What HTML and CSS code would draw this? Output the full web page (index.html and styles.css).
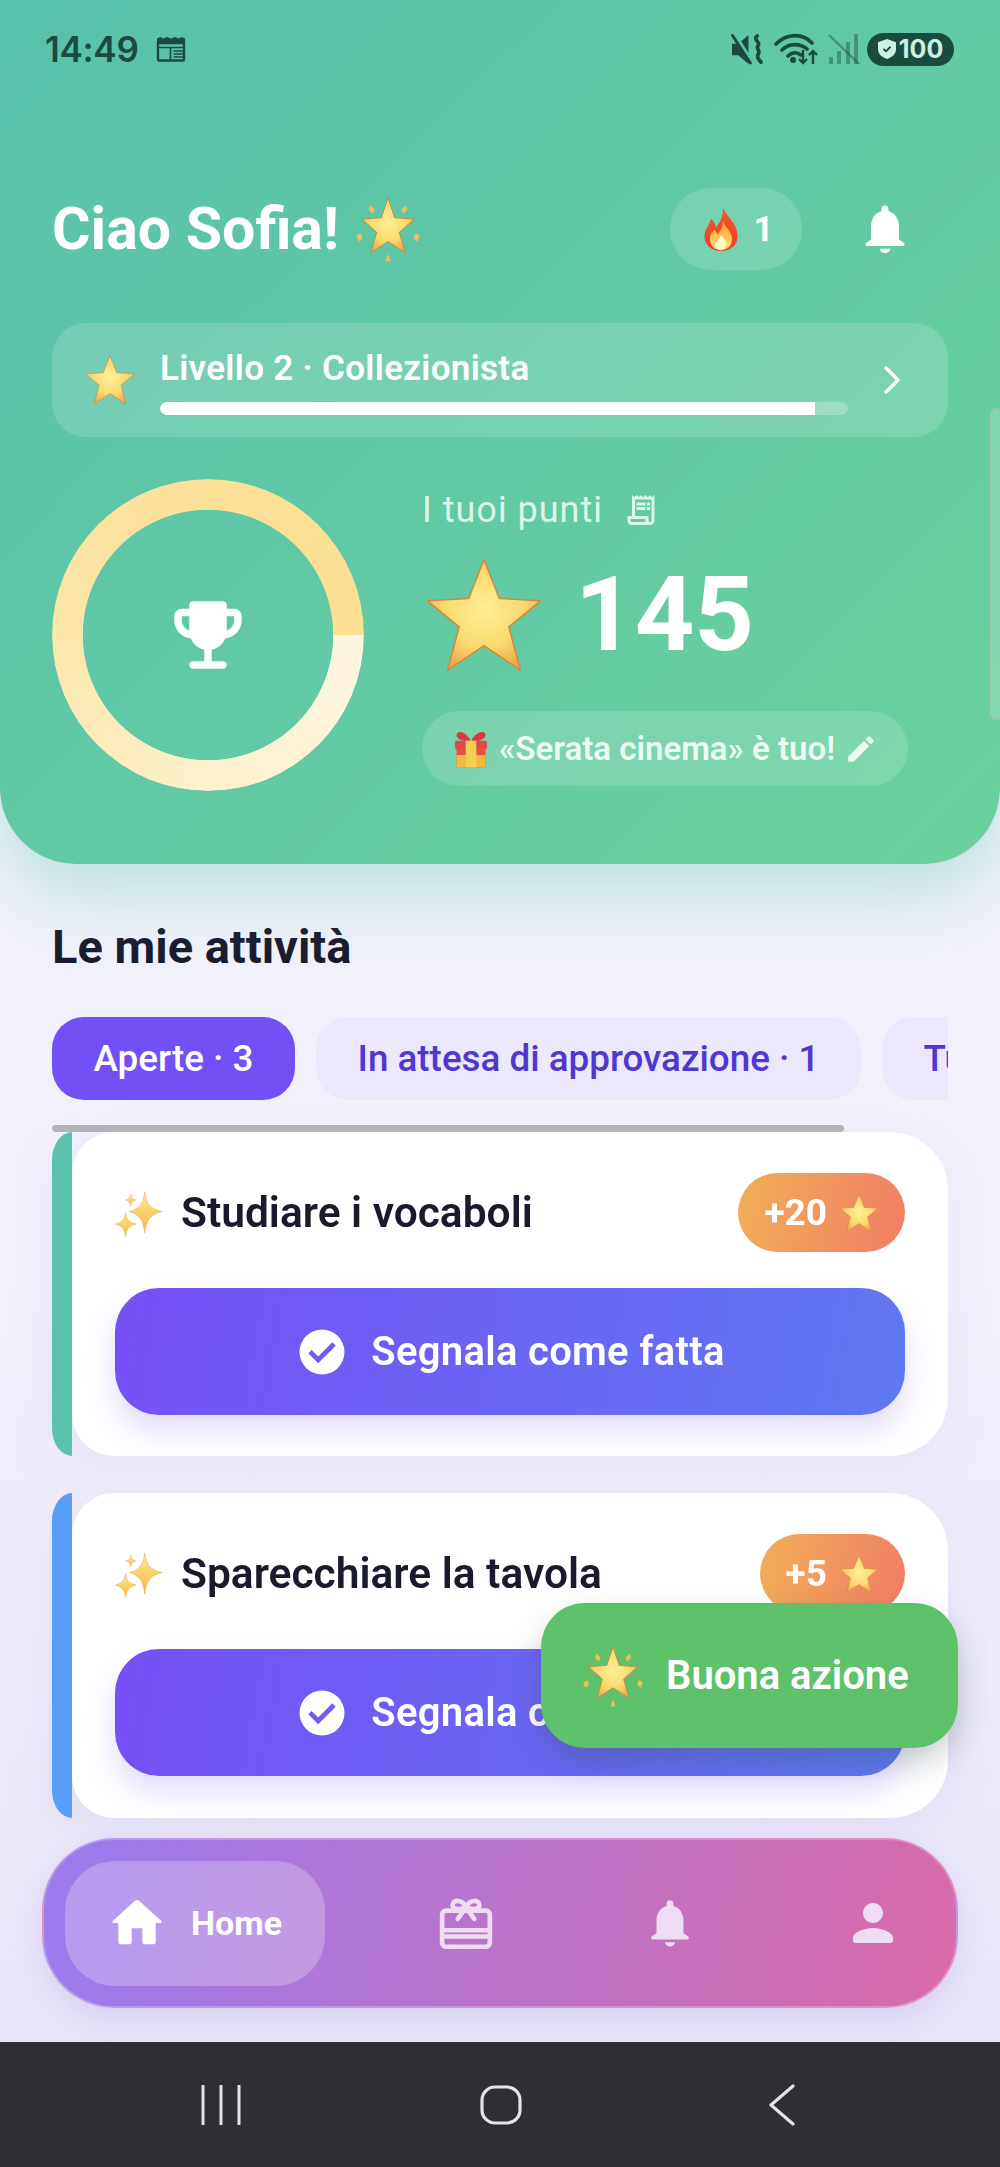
FILE: index.html
```html
<!DOCTYPE html>
<html lang="it">
<head>
<meta charset="utf-8">
<title>Ciao Sofia</title>
<link rel="stylesheet" href="styles.css">
</head>
<body>
<svg class="defs" aria-hidden="true">
  <defs>
    <radialGradient id="gStar" cx="50%" cy="45%" r="58%">
      <stop offset="0" stop-color="#FFEE96"/>
      <stop offset=".6" stop-color="#FBD970"/>
      <stop offset="1" stop-color="#EFA24A"/>
    </radialGradient>
    <linearGradient id="gSpark" x1="0" y1="0" x2="0" y2="1">
      <stop offset="0" stop-color="#FFE98F"/>
      <stop offset="1" stop-color="#F3B944"/>
    </linearGradient>
    <linearGradient id="gFire" x1="0" y1="0" x2="0" y2="1">
      <stop offset="0" stop-color="#F4572B"/>
      <stop offset="1" stop-color="#E8402B"/>
    </linearGradient>
    <linearGradient id="gFlame" x1="0" y1="0" x2="0" y2="1">
      <stop offset="0" stop-color="#F99A2C"/>
      <stop offset="1" stop-color="#FFE36E"/>
    </linearGradient>
    <symbol id="star" viewBox="0 0 100 100">
      <path d="M50 3 63 36 98 38 71 60 81 97 50 76 19 97 29 60 2 38 37 36Z" fill="url(#gStar)" stroke="#CF8A3F" stroke-width="1.300" stroke-linejoin="round"/>
    </symbol>
    <symbol id="glow" viewBox="0 0 100 100">
      <path d="M50 3 60 33 90 35 67 55 76 86 50 69 24 86 33 55 10 35 40 33Z" fill="url(#gStar)" stroke="#C98238" stroke-width="1.300" stroke-linejoin="round"/>
      <path d="M23 14 30 20 27 27 21 21ZM77 14 70 20 73 27 79 21ZM2 60 9 57 11 65 5 69ZM98 60 91 57 89 65 95 69ZM50 88 54 99H46Z" fill="#F4BE55"/>
    </symbol>
    <symbol id="sparkles" viewBox="0 0 100 100">
      <path d="M62 6C65 32 74 41 98 47 74 53 65 64 62 92 59 64 50 53 30 47 50 41 59 32 62 6Z" fill="url(#gSpark)" stroke="#E3A63C" stroke-width="1"/>
      <path d="M22 49C24 64 29 69 44 73 29 77 24 83 22 99 20 83 15 77 1 73 15 69 20 64 22 49Z" fill="url(#gSpark)" stroke="#E3A63C" stroke-width="1"/>
      <path d="M33 10C34 18 36 21 44 23 36 25 34 28 33 36 32 28 30 25 22 23 30 21 32 18 33 10Z" fill="url(#gSpark)" stroke="#E3A63C" stroke-width=".8"/>
    </symbol>
    <symbol id="fire" viewBox="0 0 100 100">
      <path d="M54 2C60 22 86 36 86 66 86 86 70 98 50 98 30 98 14 86 14 66 14 50 24 42 28 28 36 34 38 40 39 46 48 36 56 20 54 2Z" fill="url(#gFire)"/>
      <path d="M54 32C58 46 74 54 74 72 74 88 63 96 50 96 37 96 26 88 26 72 26 62 32 56 35 50 39 54 41 58 42 62 49 54 55 44 54 32Z" fill="url(#gFlame)"/>
      <path d="M51 62C54 70 62 74 62 83 62 91 56 96 50 96 44 96 38 91 38 83 38 74 48 72 51 62Z" fill="#FFF6C9"/>
    </symbol>
    <symbol id="gift" viewBox="0 0 100 100">
      <path d="M48 26C36 4 14 0 12 12 10 24 30 30 48 30ZM52 26C64 4 86 0 88 12 90 24 70 30 52 30Z" fill="#D9383F"/>
      <rect x="8" y="28" width="84" height="22" rx="3" fill="#E3454A"/>
      <rect x="12" y="48" width="76" height="50" rx="3" fill="#E2533F"/>
      <rect x="12" y="66" width="76" height="32" rx="3" fill="#F2B73D"/>
      <rect x="36" y="28" width="28" height="70" fill="#F8CE52"/>
    </symbol>
    <symbol id="i-bell" viewBox="0 0 24 24">
      <path d="M12 1.900a1.500 1.500 0 0 1 1.500 1.500v1C16.400 5.100 18 7.800 18 11v5.500l2 1.400c.7.500.4 1.400-.4 1.400H4.400c-.8 0-1.100-.9-.4-1.400l2-1.400V11c0-3.200 1.600-5.900 4.500-6.600v-1A1.500 1.500 0 0 1 12 1.900zM9.700 20.500h4.600c-.2 1.100-1.100 1.900-2.300 1.900s-2.100-.8-2.300-1.900z"/>
    </symbol>
    <symbol id="i-home" viewBox="0 0 24 24">
      <path d="M10 19v-5h4v5c0 .55.45 1 1 1h3c.55 0 1-.45 1-1v-7h1.700c.46 0 .68-.57.33-.87L12.670 3.600c-.38-.34-.96-.34-1.340 0l-8.360 7.530c-.34.3-.13.87.33.87H5v7c0 .55.45 1 1 1h3c.55 0 1-.45 1-1z"/>
    </symbol>
    <symbol id="i-person" viewBox="0 0 24 24">
      <path d="M12 12c2.210 0 4-1.790 4-4s-1.790-4-4-4-4 1.790-4 4 1.790 4 4 4zm0 2c-2.670 0-8 1.340-8 4v1c0 .55.45 1 1 1h14c.55 0 1-.45 1-1v-1c0-2.660-5.330-4-8-4z"/>
    </symbol>
    <symbol id="i-check" viewBox="0 0 24 24">
      <path fill-rule="evenodd" d="M12 2a10 10 0 1 0 0 20 10 10 0 0 0 0-20zM10.300 17 5.900 12.600l1.500-1.500 2.900 2.900 6.300-6.300 1.500 1.500z"/>
    </symbol>
  </defs>
</svg>

<div class="app">
  <header class="hero">
    <div class="status">
      <div class="status-left">
        <span class="clock">14:49</span>
        <svg class="ic-cal" viewBox="0 0 30 26">
          <path d="M1 2.500 4 1l3.500 1.500L11 1l4 1.500L19 1l3.500 1.500L26 1l3 1.500V8H1z" fill="#1B4A3F"/>
          <path d="M2 7h26v16.500a1 1 0 0 1-1 1H3a1 1 0 0 1-1-1z" fill="none" stroke="#1B4A3F" stroke-width="2.400"/>
          <path d="M2 11.500h26M14.500 11.500V24M17.500 15h10M17.500 18h10M17.500 21h10" fill="none" stroke="#1B4A3F" stroke-width="1.700"/>
        </svg>
      </div>
      <div class="status-right">
        <svg class="ic-mute" viewBox="0 0 34 32">
          <path d="M1 10h6.500L18 1v30L7.500 22H1z" fill="#1B4A3F"/>
          <path d="M4 1 21 28" stroke="#5DC6A4" stroke-width="4"/>
          <path d="M1.500 1.500 20 30" stroke="#1B4A3F" stroke-width="3" stroke-linecap="round"/>
          <path d="M27 2c-5 4 4 6 1 10-3 3 3 5 0 9-2 3 1 6 3 8" fill="none" stroke="#1B4A3F" stroke-width="3.800" stroke-linecap="round"/>
        </svg>
        <svg class="ic-wifi" viewBox="0 0 44 32">
          <path d="M2 11C13 0 29 0 38 10M8 17c7-7 18-7 25-1M14 23c4-4 9-4 13-1" fill="none" stroke="#1B4A3F" stroke-width="3.600" stroke-linecap="round"/>
          <circle cx="19" cy="27" r="3" fill="#1B4A3F"/>
          <path d="M29 17v13M25 26l4 4 4-4M39 31V18M35 22l4-4 4 4" fill="none" stroke="#1B4A3F" stroke-width="2.400"/>
        </svg>
        <svg class="ic-signal" viewBox="0 0 32 32">
          <g fill="#1B4A3F" opacity=".42">
            <rect x="1" y="24" width="4" height="7"/>
            <rect x="9" y="18" width="4" height="13"/>
            <rect x="18" y="9" width="4" height="22"/>
            <rect x="26" y="1" width="4" height="30"/>
          </g>
          <path d="M1 2 31 31" stroke="#1B4A3F" stroke-width="2.400" opacity=".42"/>
        </svg>
        <span class="battery">
          <svg class="ic-shield" viewBox="0 0 20 22">
            <path d="M10 0 20 3.500V11c0 5.500-4 9-10 11C4 20 0 16.500 0 11V3.500z" fill="#CFEFE2"/>
            <path d="M6 11l3 2.500L14 8.500" fill="none" stroke="#1B4A3F" stroke-width="2"/>
          </svg>
          <span>100</span>
        </span>
      </div>
    </div>

    <div class="greeting">
      <h1 class="hello"><span>Ciao Sofia!</span><svg class="emoji-hello"><use href="#glow"/></svg></h1>
      <div class="greeting-actions">
        <div class="streak"><svg class="emoji-fire"><use href="#fire"/></svg><span>1</span></div>
        <svg class="bell"><use href="#i-bell"/></svg>
      </div>
    </div>

    <div class="level">
      <svg class="emoji-level"><use href="#star"/></svg>
      <div class="level-main">
        <div class="level-title">Livello 2 · Collezionista</div>
        <div class="level-track"><div class="level-fill"></div></div>
      </div>
      <svg class="chevron" viewBox="0 0 20 30"><path d="M4 3 16 15 4 27" fill="none" stroke="#fff" stroke-width="3.400" stroke-linecap="round" stroke-linejoin="round"/></svg>
    </div>

    <div class="points">
      <div class="ring">
        <div class="ring-band"></div>
        <svg class="trophy" viewBox="0 0 24 24"><path d="M19 5h-2V4c0-.55-.45-1-1-1H8c-.55 0-1 .45-1 1v1H5c-1.100 0-2 .9-2 2v1c0 2.550 1.920 4.630 4.390 4.940.63 1.500 1.980 2.630 3.610 2.960V19H8c-.55 0-1 .45-1 1s.45 1 1 1h8c.55 0 1-.45 1-1s-.45-1-1-1h-3v-3.100c1.630-.33 2.980-1.460 3.610-2.960C19.080 12.630 21 10.550 21 8V7c0-1.100-.9-2-2-2zM5 8V7h2v3.820C5.840 10.400 5 9.300 5 8zm14 0c0 1.300-.84 2.400-2 2.820V7h2v1z"/></svg>
      </div>
      <div class="points-info">
        <div class="points-label">
          <span>I tuoi punti</span>
          <svg class="receipt" viewBox="0 0 24 24"><path d="M19.500 3.500 18 2l-1.500 1.500L15 2l-1.500 1.500L12 2l-1.500 1.500L9 2 7.500 3.500 6 2v14H3v3c0 1.660 1.340 3 3 3h12c1.660 0 3-1.340 3-3V2l-1.500 1.500zM15 20H6c-.55 0-1-.45-1-1v-1h10v2zm4-1c0 .55-.45 1-1 1s-1-.45-1-1v-3H8V5h11v14zM9 7h6v2H9zm7 0h2v2h-2zM9 10h6v2H9zm7 0h2v2h-2z"/></svg>
        </div>
        <div class="points-value">
          <svg class="emoji-big"><use href="#star"/></svg>
          <span>145</span>
        </div>
        <div class="reward">
          <svg class="emoji-gift"><use href="#gift"/></svg>
          <span>«Serata cinema» è tuo!</span>
          <svg class="edit" viewBox="0 0 24 24"><path d="M3 17.250V21h3.750L17.810 9.940l-3.750-3.750L3 17.250zM20.710 7.040a1 1 0 0 0 0-1.410l-2.340-2.340a1 1 0 0 0-1.410 0l-1.830 1.830 3.750 3.750 1.830-1.830z"/></svg>
        </div>
      </div>
    </div>
  </header>

  <main class="content">
    <h2 class="section-title">Le mie attività</h2>
    <div class="tabs">
      <span class="tab tab-active">Aperte · 3</span>
      <span class="tab">In attesa di approvazione · 1</span>
      <span class="tab">Tutte · 4</span>
    </div>
    <div class="tabs-scroll"></div>

    <article class="card">
      <div class="strip strip-teal"></div>
      <div class="card-body">
        <div class="card-head">
          <div class="card-title"><svg class="emoji-spark"><use href="#sparkles"/></svg><span>Studiare i vocaboli</span></div>
          <div class="reward-chip"><span>+20</span><svg class="emoji-chip"><use href="#star"/></svg></div>
        </div>
        <button class="done"><svg class="check"><use href="#i-check"/></svg><span>Segnala come fatta</span></button>
      </div>
    </article>

    <article class="card card-next">
      <div class="strip strip-blue"></div>
      <div class="card-body">
        <div class="card-head">
          <div class="card-title"><svg class="emoji-spark"><use href="#sparkles"/></svg><span>Sparecchiare la tavola</span></div>
          <div class="reward-chip"><span>+5</span><svg class="emoji-chip"><use href="#star"/></svg></div>
        </div>
        <button class="done"><svg class="check"><use href="#i-check"/></svg><span>Segnala come fatta</span></button>
      </div>
    </article>
  </main>

  <nav class="tabbar">
    <div class="nav-home"><svg class="nav-ic-home"><use href="#i-home"/></svg><span>Home</span></div>
    <svg class="nav-ic nav-gift" viewBox="0 0 54 50">
      <path d="M8 13h38a4 4 0 0 1 4 4v27a4 4 0 0 1-4 4H8a4 4 0 0 1-4-4V17a4 4 0 0 1 4-4zM4 32h46M4 38h46" fill="none" stroke="#EEDCF2" stroke-width="4.500"/>
      <path d="M19 21 27 10 35 21M27 10c-3-8-13-8-13-2 0 3 5 5 13 2zM27 10c3-8 13-8 13-2 0 3-5 5-13 2z" fill="none" stroke="#EEDCF2" stroke-width="4.500" stroke-linecap="round"/>
    </svg>
    <svg class="nav-ic nav-bell"><use href="#i-bell"/></svg>
    <svg class="nav-ic nav-person"><use href="#i-person"/></svg>
  </nav>

  <footer class="sysbar">
    <svg class="sys-recent" viewBox="0 0 40 40"><path d="M2 1v38M20 1v38M38 1v38" stroke="#E4E4E6" stroke-width="3" stroke-linecap="round"/></svg>
    <svg class="sys-home" viewBox="0 0 42 40"><rect x="2" y="2" width="38" height="36" rx="13" fill="none" stroke="#E4E4E6" stroke-width="3.200"/></svg>
    <svg class="sys-back" viewBox="0 0 28 42"><path d="M25 2 3 21 25 40" fill="none" stroke="#E4E4E6" stroke-width="3.200" stroke-linecap="round" stroke-linejoin="round"/></svg>
  </footer>

  <div class="edge-scroll"></div>
  <div class="snackbar"><svg class="emoji-snack"><use href="#glow"/></svg><span>Buona azione</span></div>
</div>
</body>
</html>
```
FILE: styles.css
```css
* { box-sizing: border-box; }
html, body { margin: 0; padding: 0; }
body { font-family: Roboto, "Liberation Sans", sans-serif; }
.defs { position: absolute; width: 0; height: 0; overflow: hidden; }

.app {
  position: relative;
  width: 1000px;
  height: 2167px;
  overflow: hidden;
  display: flex;
  flex-direction: column;
  background: linear-gradient(180deg, #F4F4FC 0%, #F1F0FB 60%, #E6E2F7 100%);
}

/* Hero */
.hero {
  position: relative;
  height: 864px;
  flex: none;
  padding: 0 52px;
  color: #fff;
  background: linear-gradient(135deg, #58C1AB 0%, #6AD19D 100%);
  border-radius: 0 0 76px 76px;
  box-shadow: 0 30px 70px rgba(88, 194, 172, .36);
}
.status { height: 98px; display: flex; align-items: center; justify-content: space-between; margin: 0 -6px 0 -7px; }
.status-left { display: flex; align-items: center; gap: 18px; }
.clock { font-family: Inter, Roboto, sans-serif; font-size: 35px; font-weight: 600; color: #1B4A3F; letter-spacing: -.3px; }
.ic-cal { width: 30px; height: 26px; }
.status-right { display: flex; align-items: center; }
.ic-mute { width: 33px; height: 31px; margin-right: 10px; }
.ic-wifi { width: 44px; height: 32px; margin-right: 10px; }
.ic-signal { width: 32px; height: 32px; margin-right: 7px; }
.battery {
  height: 33px;
  width: 87px;
  border-radius: 17px;
  background: #1B4A3F;
  color: #CFEFE2;
  font-family: Inter, Roboto, sans-serif;
  font-size: 25px;
  font-weight: 700;
  display: flex;
  align-items: center;
  justify-content: center;
  gap: 3px;
}
.ic-shield { width: 18px; height: 20px; }

.greeting { margin-top: 90px; height: 82px; display: flex; align-items: center; justify-content: space-between; }
.hello { margin: 0; font-size: 59px; font-weight: 700; line-height: 82px; display: flex; align-items: center; gap: 16px; }
.emoji-hello { width: 66px; height: 66px; }
.greeting-actions { display: flex; align-items: center; }
.streak {
  width: 132px;
  height: 82px;
  border-radius: 41px;
  background: rgba(255, 255, 255, .15);
  display: flex;
  align-items: center;
  justify-content: center;
  gap: 9px;
  font-size: 35px;
  font-weight: 700;
}
.emoji-fire { width: 46px; height: 46px; }
.bell { width: 56px; height: 56px; margin: 0 35px 0 55px; fill: #fff; }

.level {
  margin-top: 53px;
  height: 114px;
  border-radius: 34px;
  background: rgba(255, 255, 255, .15);
  display: flex;
  align-items: center;
  padding: 0 38px 0 32px;
}
.emoji-level { width: 52px; height: 52px; flex: none; margin-right: 24px; }
.level-main { width: 688px; padding-top: 3px; }
.level-title { font-size: 35px; font-weight: 600; line-height: 40px; letter-spacing: .3px; }
.level-track { margin-top: 13px; height: 13px; border-radius: 7px; background: rgba(255, 255, 255, .25); overflow: hidden; }
.level-fill { width: 95.200%; height: 100%; border-radius: 7px 0 0 7px; background: #fff; }
.chevron { width: 20px; height: 30px; margin-left: 34px; flex: none; }

.points { margin-top: 42px; display: flex; }
.ring { position: relative; width: 312px; height: 312px; flex: none; display: flex; align-items: center; justify-content: center; }
.ring-band {
  position: absolute;
  inset: 0;
  border-radius: 50%;
  background: conic-gradient(from 90deg, #FDF6E2 0deg, #FDF1CD 90deg, #FBE7A9 180deg, #FBE096 270deg, #FBDF93 360deg);
  -webkit-mask: radial-gradient(closest-side, transparent 80%, #000 80.500%);
  mask: radial-gradient(closest-side, transparent 80%, #000 80.500%);
}
.trophy { width: 90px; height: 90px; fill: #fff; }
.points-info { margin-left: 58px; display: flex; flex-direction: column; align-items: flex-start; }
.points-label { display: flex; align-items: center; gap: 20px; font-size: 36px; letter-spacing: 1px; line-height: 40px; color: #DDF6EC; margin-top: 11px; }
.receipt { width: 36px; height: 36px; fill: #DDF6EC; }
.points-value { margin-top: 30px; height: 110px; display: flex; align-items: center; font-size: 104px; font-weight: 700; line-height: 110px; }
.emoji-big { width: 118px; height: 118px; margin: 0 32px 0 3px; }
.reward {
  margin-top: 41px;
  height: 75px;
  width: 486px;
  border-radius: 38px;
  background: rgba(255, 255, 255, .15);
  display: flex;
  align-items: center;
  justify-content: center;
  gap: 9px;
  font-size: 33px;
  font-weight: 600;
  color: #ECFAF4;
}
.emoji-gift { width: 38px; height: 38px; flex: none; }
.edit { width: 34px; height: 34px; fill: #ECFAF4; flex: none; }

/* Content */
.content { padding: 0 52px; flex: none; }
.section-title { margin: 58px 0 0; font-size: 47px; line-height: 50px; font-weight: 700; color: #1A1A2E; }
.tabs { margin-top: 45px; display: flex; gap: 21px; overflow: hidden; }
.tab {
  flex: none;
  height: 83px;
  padding: 0 41.500px;
  border-radius: 32px;
  background: #ECE7FB;
  color: #4F37CF;
  font-size: 36.800px;
  font-weight: 500;
  line-height: 83px;
}
.tab-active { background: #7350F5; color: #fff; }
.tabs-scroll { margin-top: 25px; width: 792px; height: 7px; border-radius: 4px; background: #B5B5B8; }

.card { display: flex; height: 324px; filter: drop-shadow(0 12px 24px rgba(90, 80, 180, .06)); }
.card-next { margin-top: 37px; height: 325px; }
.strip { width: 20px; flex: none; border-radius: 20px 0 0 20px / 28px 0 0 28px; }
.strip-teal { background: #5BC2AC; }
.strip-blue { background: #589EF8; }
.card-body { flex: 1; background: #fff; border-radius: 42px 58px 58px 42px; padding: 41px 43px 0; }
.card-head { height: 79px; display: flex; align-items: center; justify-content: space-between; }
.card-title { display: flex; align-items: center; gap: 18px; font-size: 42.500px; font-weight: 600; color: #1A1A2E; }
.emoji-spark { width: 48px; height: 48px; flex: none; }
.reward-chip {
  height: 79px;
  padding: 0 26px;
  border-radius: 40px;
  background: linear-gradient(100deg, #F2AE58 0%, #F07E65 100%);
  color: #fff;
  font-size: 37px;
  font-weight: 700;
  display: flex;
  align-items: center;
  gap: 12px;
}
.emoji-chip { width: 40px; height: 40px; }
.done {
  margin-top: 36px;
  width: 100%;
  height: 127px;
  border: 0;
  border-radius: 44px;
  background: linear-gradient(100deg, #7650F7 0%, #5F78F0 100%);
  box-shadow: 0 16px 30px rgba(115, 80, 245, .2);
  color: #fff;
  font-family: inherit;
  font-size: 40px;
  font-weight: 600;
  letter-spacing: .3px;
  display: flex;
  align-items: center;
  justify-content: center;
  gap: 22px;
}
.check { width: 54px; height: 54px; fill: #fff; }

/* Bottom nav */
.tabbar {
  margin: 20px 42px 0;
  height: 170px;
  flex: none;
  border-radius: 72px;
  border: 2px solid rgba(255, 255, 255, .25);
  background: linear-gradient(100deg, #9A7CEF 0%, #DA6BA8 100%);
  box-shadow: 0 12px 30px rgba(120, 90, 200, .14);
  padding: 0 0 0 21px;
  display: flex;
  align-items: center;
}
.nav-home {
  flex: none;
  width: 260px;
  height: 125px;
  border-radius: 50px;
  background: rgba(255, 255, 255, .25);
  display: flex;
  align-items: center;
  gap: 24px;
  padding-left: 44px;
  color: #fff;
  font-size: 34px;
  font-weight: 700;
}
.nav-ic-home { width: 64px; height: 64px; fill: #fff; margin-left: -4px; margin-right: -2px; }
.nav-ic { flex: none; fill: #EEDCF2; }
.nav-gift { width: 56px; height: 52px; margin-left: 113px; }
.nav-bell { width: 54px; height: 54px; margin-left: 149px; }
.nav-person { width: 60px; height: 60px; margin-left: 146px; }

.sysbar {
  margin-top: auto;
  height: 125px;
  flex: none;
  background: #2F2F33;
  display: flex;
  align-items: center;
  padding-left: 201px;
}
.sys-recent { width: 40px; height: 40px; }
.sys-home { width: 42px; height: 40px; margin-left: 239px; }
.sys-back { width: 28px; height: 42px; margin-left: 246px; }

/* Overlays */
.edge-scroll {
  position: absolute;
  top: 408px;
  right: -4px;
  width: 14px;
  height: 312px;
  border-radius: 7px;
  border: 2px solid rgba(170, 190, 185, .55);
  background: rgba(255, 255, 255, .18);
}
.snackbar {
  position: absolute;
  left: 541px;
  top: 1603px;
  width: 417px;
  height: 145px;
  border-radius: 44px;
  background: #5EC26A;
  box-shadow: 0 14px 30px rgba(40, 70, 60, .25);
  color: #fff;
  font-size: 40px;
  font-weight: 600;
  display: flex;
  align-items: center;
  gap: 22px;
  padding-left: 41px;
}
.emoji-snack { width: 62px; height: 62px; flex: none; }
```
